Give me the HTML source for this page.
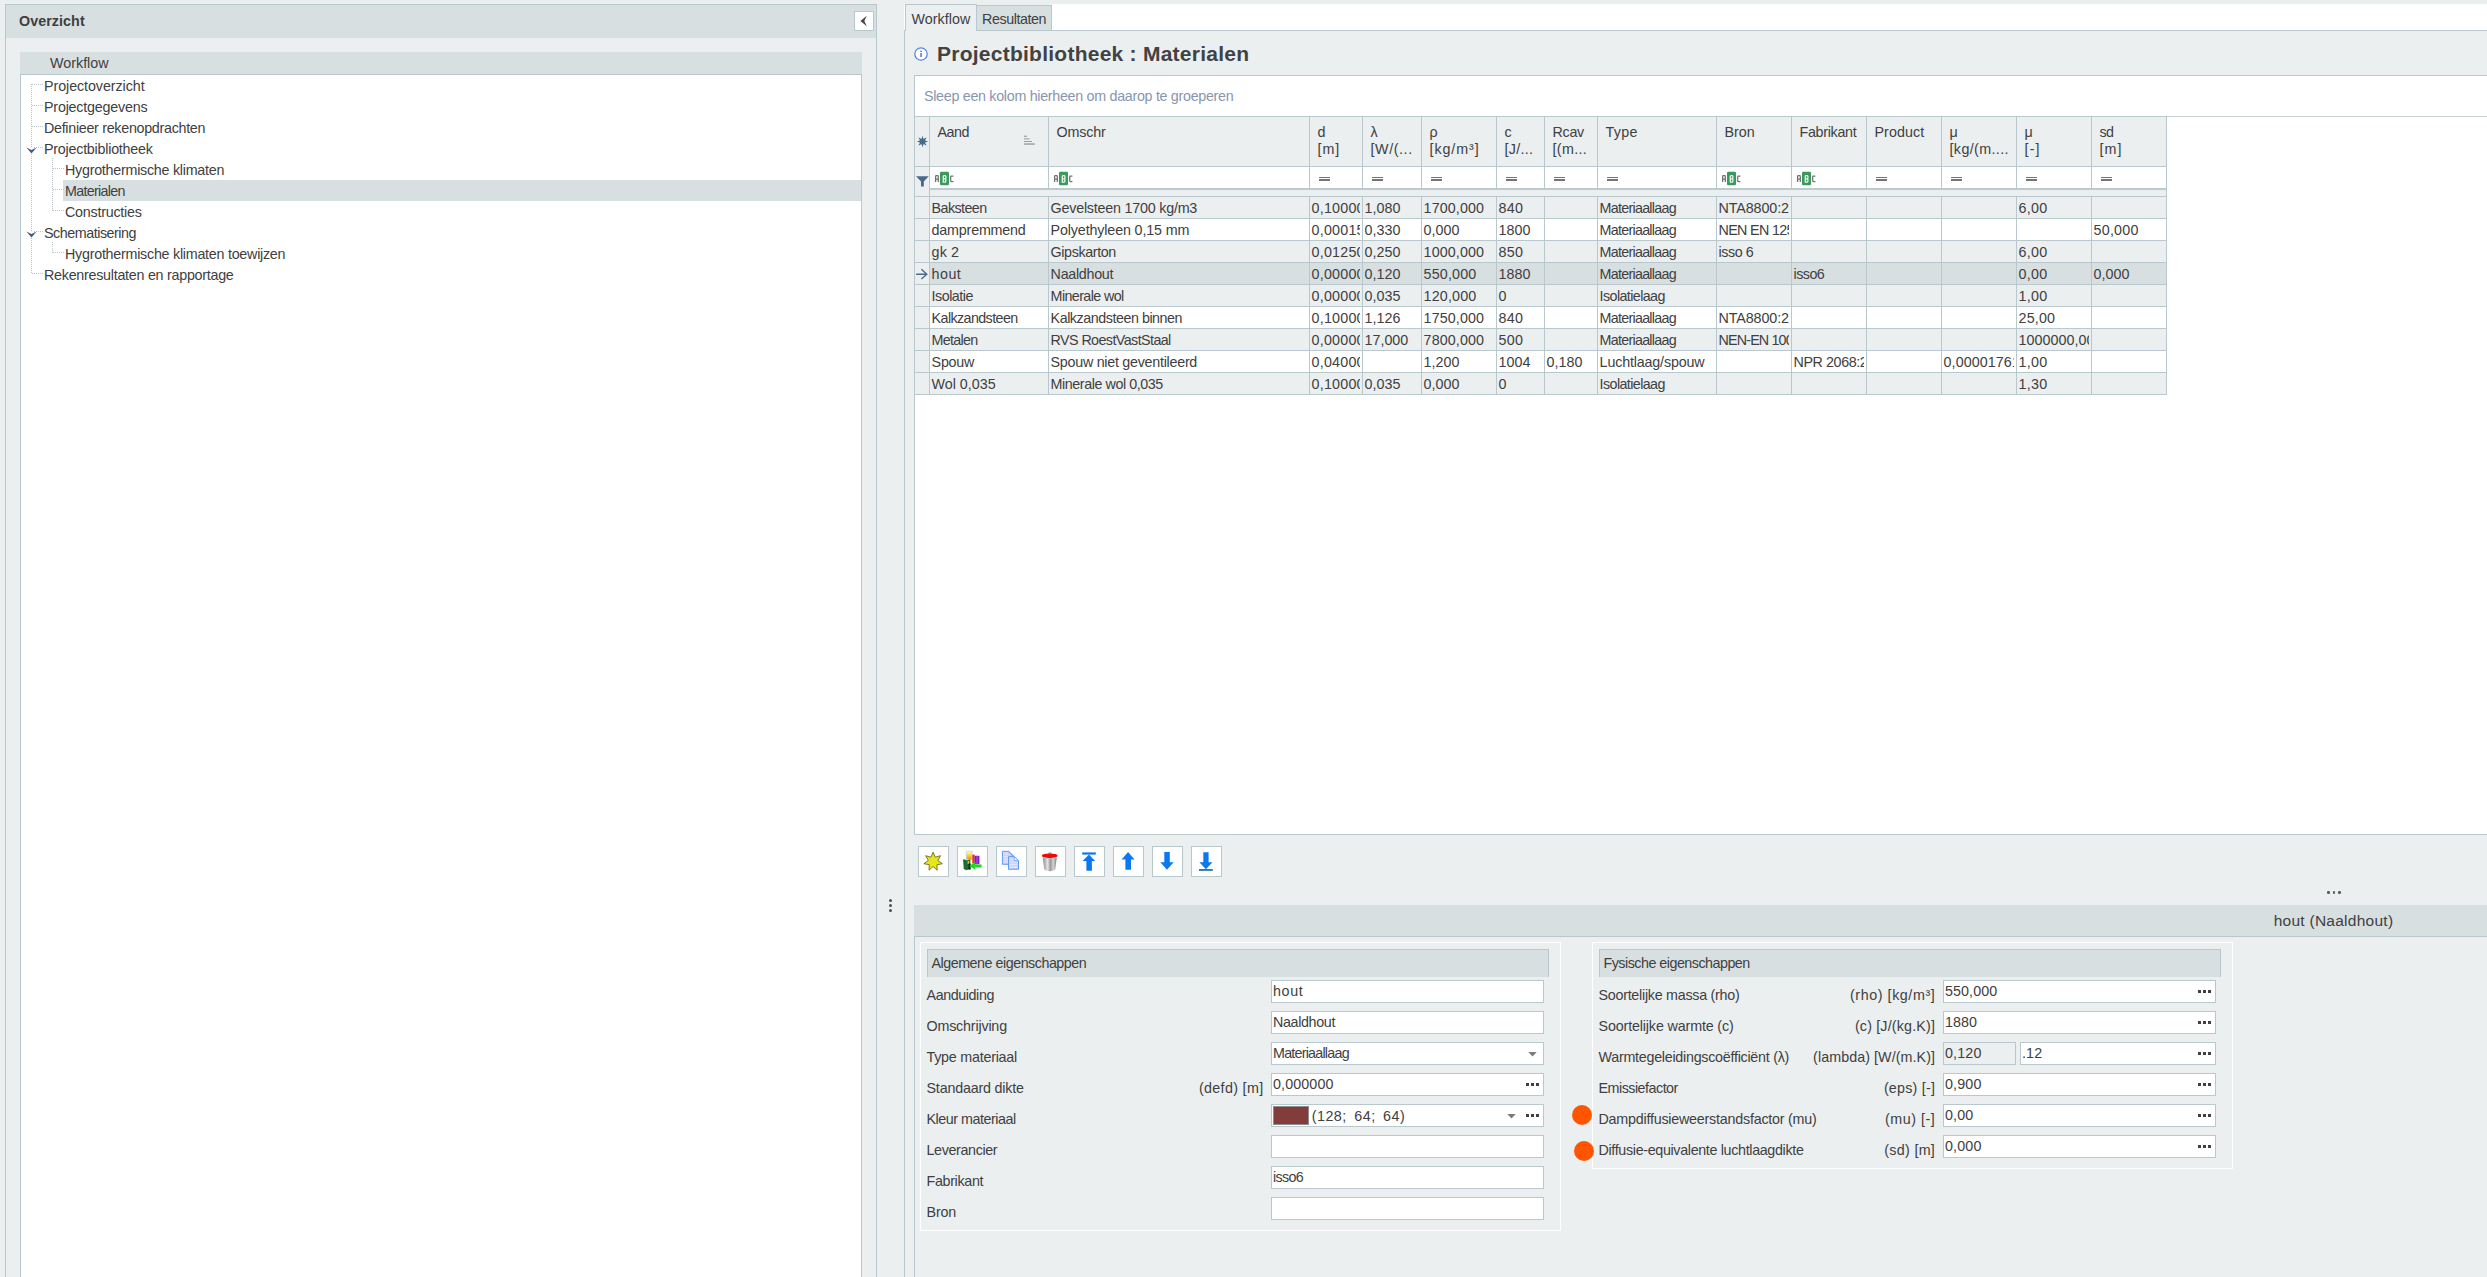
<!DOCTYPE html>
<html><head><meta charset="utf-8"><title>Projectbibliotheek : Materialen</title>
<style>
html,body{margin:0;padding:0}
body{width:2487px;height:1277px;overflow:hidden;background:#ebeff0;position:relative;font-family:"Liberation Sans",sans-serif;font-size:14.3px;color:#404040}
.a{position:absolute;box-sizing:border-box}
.t{position:absolute;white-space:nowrap;line-height:16px;height:16px}
.c{position:absolute;overflow:hidden;height:21px;box-sizing:border-box}
.c .t{top:3px;left:2.6px}
.hl{position:absolute;height:1px;background:#b9c8cc}
.vl{position:absolute;width:1px;background:#b9c8cc}
.inp{position:absolute;box-sizing:border-box;background:#fff;border:1px solid #b9c8cc;height:23px;overflow:hidden}
.btn{position:absolute;box-sizing:border-box;background:#fff;border:1px solid #b9c8cc;width:31px;height:31px}
.d3{position:absolute;width:3px;height:3px;background:#404040;box-shadow:5px 0 0 #404040,10px 0 0 #404040}
</style></head><body>

<div class="a" style="left:5px;top:4px;width:872px;height:1290px;border:1px solid #b9c8cc"></div>
<div class="a" style="left:6px;top:5px;width:870px;height:33px;background:#d8dfe1"></div>
<div class="t" style="left:19px;top:12.5px;font-size:14.3px;font-weight:bold;color:#3e3e3e;letter-spacing:0.064px">Overzicht</div>
<div class="a" style="left:854px;top:11px;width:20px;height:20px;background:#fff;border:1px solid #b9c8cc"></div>
<svg class="a" style="left:854px;top:11px" width="20" height="20" viewBox="0 0 20 20"><path d="M12.8 4.8 L6.4 10 L12.8 15.2 L10.4 10 Z" fill="#484848"/></svg>
<div class="a" style="left:20px;top:52px;width:842px;height:23px;background:#d8dfe1;border-bottom:1px solid #b9c8cc"></div>
<div class="a" style="left:20px;top:75px;width:842px;height:1210px;background:#fff;border-left:1px solid #b9c8cc;border-right:1px solid #b9c8cc"></div>
<div class="t" style="left:50px;top:55px;letter-spacing:0.009px">Workflow</div>
<div class="a" style="left:63px;top:180px;width:798px;height:21px;background:#d8dfe1"></div>
<div class="a" style="left:31px;top:84px;width:1px;height:190px;background:repeating-linear-gradient(to bottom,#bac6ce 0,#bac6ce 1px,transparent 1px,transparent 2px)"></div>
<div class="a" style="left:52px;top:158px;width:1px;height:53px;background:repeating-linear-gradient(to bottom,#bac6ce 0,#bac6ce 1px,transparent 1px,transparent 2px)"></div>
<div class="a" style="left:52px;top:242px;width:1px;height:11px;background:repeating-linear-gradient(to bottom,#bac6ce 0,#bac6ce 1px,transparent 1px,transparent 2px)"></div>
<div class="a" style="left:32px;top:84px;width:11px;height:1px;background:repeating-linear-gradient(to right,#bac6ce 0,#bac6ce 1px,transparent 1px,transparent 2px)"></div>
<div class="t" style="left:44px;top:77.5px;letter-spacing:-0.072px">Projectoverzicht</div>
<div class="a" style="left:32px;top:105px;width:11px;height:1px;background:repeating-linear-gradient(to right,#bac6ce 0,#bac6ce 1px,transparent 1px,transparent 2px)"></div>
<div class="t" style="left:44px;top:98.5px;letter-spacing:-0.201px">Projectgegevens</div>
<div class="a" style="left:32px;top:126px;width:11px;height:1px;background:repeating-linear-gradient(to right,#bac6ce 0,#bac6ce 1px,transparent 1px,transparent 2px)"></div>
<div class="t" style="left:44px;top:119.5px;letter-spacing:-0.294px">Definieer rekenopdrachten</div>
<div class="a" style="left:32px;top:147px;width:11px;height:1px;background:repeating-linear-gradient(to right,#bac6ce 0,#bac6ce 1px,transparent 1px,transparent 2px)"></div>
<div class="t" style="left:44px;top:140.5px;letter-spacing:-0.232px">Projectbibliotheek</div>
<svg class="a" style="left:25px;top:143px" width="13" height="12" viewBox="0 0 13 12"><rect x="5" y="4" width="3" height="7" fill="#fff"/><path d="M1.4 4.4 L6.5 10.4 L11.6 4.4 L6.5 6.9 Z" fill="#3f5f85"/></svg>
<div class="a" style="left:53px;top:168px;width:11px;height:1px;background:repeating-linear-gradient(to right,#bac6ce 0,#bac6ce 1px,transparent 1px,transparent 2px)"></div>
<div class="t" style="left:65px;top:161.5px;letter-spacing:-0.255px">Hygrothermische klimaten</div>
<div class="a" style="left:53px;top:189px;width:11px;height:1px;background:repeating-linear-gradient(to right,#bac6ce 0,#bac6ce 1px,transparent 1px,transparent 2px)"></div>
<div class="t" style="left:65px;top:182.5px;letter-spacing:-0.702px">Materialen</div>
<div class="a" style="left:53px;top:210px;width:11px;height:1px;background:repeating-linear-gradient(to right,#bac6ce 0,#bac6ce 1px,transparent 1px,transparent 2px)"></div>
<div class="t" style="left:65px;top:203.5px;letter-spacing:-0.232px">Constructies</div>
<div class="a" style="left:32px;top:231px;width:11px;height:1px;background:repeating-linear-gradient(to right,#bac6ce 0,#bac6ce 1px,transparent 1px,transparent 2px)"></div>
<div class="t" style="left:44px;top:224.5px;letter-spacing:-0.463px">Schematisering</div>
<svg class="a" style="left:25px;top:227px" width="13" height="12" viewBox="0 0 13 12"><rect x="5" y="4" width="3" height="7" fill="#fff"/><path d="M1.4 4.4 L6.5 10.4 L11.6 4.4 L6.5 6.9 Z" fill="#3f5f85"/></svg>
<div class="a" style="left:53px;top:252px;width:11px;height:1px;background:repeating-linear-gradient(to right,#bac6ce 0,#bac6ce 1px,transparent 1px,transparent 2px)"></div>
<div class="t" style="left:65px;top:245.5px;letter-spacing:-0.252px">Hygrothermische klimaten toewijzen</div>
<div class="a" style="left:32px;top:273px;width:11px;height:1px;background:repeating-linear-gradient(to right,#bac6ce 0,#bac6ce 1px,transparent 1px,transparent 2px)"></div>
<div class="t" style="left:44px;top:266.5px;letter-spacing:-0.261px">Rekenresultaten en rapportage</div>
<div class="a" style="left:889px;top:898.8px;width:3px;height:3px;border-radius:2px;background:#505050"></div>
<div class="a" style="left:889px;top:904px;width:3px;height:3px;border-radius:2px;background:#505050"></div>
<div class="a" style="left:889px;top:909.2px;width:3px;height:3px;border-radius:2px;background:#505050"></div>
<div class="a" style="left:1052px;top:4px;width:1440px;height:26px;background:#fff"></div>
<div class="hl" style="left:904px;top:30px;width:1600px"></div>
<div class="vl" style="left:904px;top:30px;height:1260px"></div>
<div class="a" style="left:905px;top:4px;width:72px;height:27px;background:#ebeff0;border:1px solid #b9c8cc;border-bottom:none"></div>
<div class="a" style="left:904px;top:4px;width:1px;height:26px;background:#fff"></div>
<div class="a" style="left:976px;top:5px;width:76px;height:26px;background:#d8dfe1;border:1px solid #b9c8cc"></div>
<div class="t" style="left:911.5px;top:11px;letter-spacing:0.049px">Workflow</div>
<div class="t" style="left:982px;top:11px;letter-spacing:-0.427px">Resultaten</div>
<svg class="a" style="left:913px;top:46px" width="16" height="16" viewBox="0 0 16 16"><circle cx="8" cy="8" r="6.2" fill="#fff" stroke="#5b86e0" stroke-width="1.3"/><rect x="7.3" y="7" width="1.5" height="4" fill="#4a76d6"/><rect x="7.3" y="4.6" width="1.5" height="1.5" fill="#4a76d6"/></svg>
<div class="t" style="left:937px;top:42.3px;font-size:21px;line-height:24px;height:24px;font-weight:bold;color:#424242;letter-spacing:0.250px">Projectbibliotheek : Materialen</div>
<div class="a" style="left:914px;top:75px;width:1600px;height:760px;background:#fff;border:1px solid #b9c8cc"></div>
<div class="t" style="left:924px;top:88.2px;color:#8796ad;letter-spacing:-0.301px">Sleep een kolom hierheen om daarop te groeperen</div>
<div class="hl" style="left:915px;top:116px;width:1600px;background:#c3cfd3"></div>
<div class="a" style="left:915px;top:116px;width:1252px;height:51px;background:#ebeff0;border-top:1px solid #b9c8cc;border-bottom:1px solid #b9c8cc"></div>
<div class="a" style="left:915px;top:167px;width:14px;height:29px;background:#ebeff0"></div>
<div class="hl" style="left:915px;top:196px;width:1252px"></div>
<div class="a" style="left:929px;top:197px;width:1237px;height:21px;background:#ebeff0"></div>
<div class="a" style="left:915px;top:197px;width:14px;height:21px;background:#ebeff0"></div>
<div class="hl" style="left:915px;top:218px;width:1252px"></div>
<div class="c" style="left:929px;top:197px;width:117px">
<div class="t" style="left:2.6px;top:2.5px;letter-spacing:-0.577px">Baksteen</div>
</div>
<div class="c" style="left:1048px;top:197px;width:259px">
<div class="t" style="left:2.6px;top:2.5px;letter-spacing:-0.215px">Gevelsteen 1700 kg/m3</div>
</div>
<div class="c" style="left:1309px;top:197px;width:51px">
<div class="t" style="left:2.6px;top:2.5px;letter-spacing:0.212px">0,100000</div>
</div>
<div class="c" style="left:1362px;top:197px;width:57px">
<div class="t" style="left:2.6px;top:2.5px;letter-spacing:0.026px">1,080</div>
</div>
<div class="c" style="left:1421px;top:197px;width:73px">
<div class="t" style="left:2.6px;top:2.5px;letter-spacing:0.101px">1700,000</div>
</div>
<div class="c" style="left:1496px;top:197px;width:46px">
<div class="t" style="left:2.6px;top:2.5px;letter-spacing:0.216px">840</div>
</div>
<div class="c" style="left:1597px;top:197px;width:117px">
<div class="t" style="left:2.6px;top:2.5px;letter-spacing:-0.731px">Materiaallaag</div>
</div>
<div class="c" style="left:1716px;top:197px;width:73px">
<div class="t" style="left:2.6px;top:2.5px;letter-spacing:-0.114px">NTA8800:2020</div>
</div>
<div class="c" style="left:2016px;top:197px;width:73px">
<div class="t" style="left:2.6px;top:2.5px;letter-spacing:0.221px">6,00</div>
</div>
<div class="a" style="left:929px;top:219px;width:1237px;height:21px;background:#fff"></div>
<div class="a" style="left:915px;top:219px;width:14px;height:21px;background:#ebeff0"></div>
<div class="hl" style="left:915px;top:240px;width:1252px"></div>
<div class="c" style="left:929px;top:219px;width:117px">
<div class="t" style="left:2.6px;top:2.5px;letter-spacing:-0.196px">dampremmend</div>
</div>
<div class="c" style="left:1048px;top:219px;width:259px">
<div class="t" style="left:2.6px;top:2.5px;letter-spacing:-0.142px">Polyethyleen 0,15 mm</div>
</div>
<div class="c" style="left:1309px;top:219px;width:51px">
<div class="t" style="left:2.6px;top:2.5px;letter-spacing:0.212px">0,000150</div>
</div>
<div class="c" style="left:1362px;top:219px;width:57px">
<div class="t" style="left:2.6px;top:2.5px;letter-spacing:0.026px">0,330</div>
</div>
<div class="c" style="left:1421px;top:219px;width:73px">
<div class="t" style="left:2.6px;top:2.5px;letter-spacing:0.026px">0,000</div>
</div>
<div class="c" style="left:1496px;top:219px;width:46px">
<div class="t" style="left:2.6px;top:2.5px;letter-spacing:0.054px">1800</div>
</div>
<div class="c" style="left:1597px;top:219px;width:117px">
<div class="t" style="left:2.6px;top:2.5px;letter-spacing:-0.731px">Materiaallaag</div>
</div>
<div class="c" style="left:1716px;top:219px;width:73px">
<div class="t" style="left:2.6px;top:2.5px;letter-spacing:-0.671px">NEN EN 12524</div>
</div>
<div class="c" style="left:2091px;top:219px;width:73px">
<div class="t" style="left:2.6px;top:2.5px;letter-spacing:0.212px">50,000</div>
</div>
<div class="a" style="left:929px;top:241px;width:1237px;height:21px;background:#ebeff0"></div>
<div class="a" style="left:915px;top:241px;width:14px;height:21px;background:#ebeff0"></div>
<div class="hl" style="left:915px;top:262px;width:1252px"></div>
<div class="c" style="left:929px;top:241px;width:117px">
<div class="t" style="left:2.6px;top:2.5px;letter-spacing:0.105px">gk 2</div>
</div>
<div class="c" style="left:1048px;top:241px;width:259px">
<div class="t" style="left:2.6px;top:2.5px;letter-spacing:-0.383px">Gipskarton</div>
</div>
<div class="c" style="left:1309px;top:241px;width:51px">
<div class="t" style="left:2.6px;top:2.5px;letter-spacing:0.212px">0,012500</div>
</div>
<div class="c" style="left:1362px;top:241px;width:57px">
<div class="t" style="left:2.6px;top:2.5px;letter-spacing:0.026px">0,250</div>
</div>
<div class="c" style="left:1421px;top:241px;width:73px">
<div class="t" style="left:2.6px;top:2.5px;letter-spacing:0.101px">1000,000</div>
</div>
<div class="c" style="left:1496px;top:241px;width:46px">
<div class="t" style="left:2.6px;top:2.5px;letter-spacing:0.216px">850</div>
</div>
<div class="c" style="left:1597px;top:241px;width:117px">
<div class="t" style="left:2.6px;top:2.5px;letter-spacing:-0.731px">Materiaallaag</div>
</div>
<div class="c" style="left:1716px;top:241px;width:73px">
<div class="t" style="left:2.6px;top:2.5px;letter-spacing:-0.429px">isso 6</div>
</div>
<div class="c" style="left:2016px;top:241px;width:73px">
<div class="t" style="left:2.6px;top:2.5px;letter-spacing:0.221px">6,00</div>
</div>
<div class="a" style="left:929px;top:263px;width:1237px;height:21px;background:#d8dfe1"></div>
<div class="a" style="left:915px;top:263px;width:14px;height:21px;background:#ebeff0"></div>
<div class="hl" style="left:915px;top:284px;width:1252px"></div>
<div class="c" style="left:929px;top:263px;width:117px">
<div class="t" style="left:2.6px;top:2.5px;letter-spacing:0.449px">hout</div>
</div>
<div class="c" style="left:1048px;top:263px;width:259px">
<div class="t" style="left:2.6px;top:2.5px;letter-spacing:-0.293px">Naaldhout</div>
</div>
<div class="c" style="left:1309px;top:263px;width:51px">
<div class="t" style="left:2.6px;top:2.5px;letter-spacing:0.212px">0,000000</div>
</div>
<div class="c" style="left:1362px;top:263px;width:57px">
<div class="t" style="left:2.6px;top:2.5px;letter-spacing:0.026px">0,120</div>
</div>
<div class="c" style="left:1421px;top:263px;width:73px">
<div class="t" style="left:2.6px;top:2.5px;letter-spacing:0.171px">550,000</div>
</div>
<div class="c" style="left:1496px;top:263px;width:46px">
<div class="t" style="left:2.6px;top:2.5px;letter-spacing:0.054px">1880</div>
</div>
<div class="c" style="left:1597px;top:263px;width:117px">
<div class="t" style="left:2.6px;top:2.5px;letter-spacing:-0.731px">Materiaallaag</div>
</div>
<div class="c" style="left:1791px;top:263px;width:73px">
<div class="t" style="left:2.6px;top:2.5px;letter-spacing:-0.553px">isso6</div>
</div>
<div class="c" style="left:2016px;top:263px;width:73px">
<div class="t" style="left:2.6px;top:2.5px;letter-spacing:0.221px">0,00</div>
</div>
<div class="c" style="left:2091px;top:263px;width:73px">
<div class="t" style="left:2.6px;top:2.5px;letter-spacing:0.026px">0,000</div>
</div>
<div class="a" style="left:929px;top:285px;width:1237px;height:21px;background:#ebeff0"></div>
<div class="a" style="left:915px;top:285px;width:14px;height:21px;background:#ebeff0"></div>
<div class="hl" style="left:915px;top:306px;width:1252px"></div>
<div class="c" style="left:929px;top:285px;width:117px">
<div class="t" style="left:2.6px;top:2.5px;letter-spacing:-0.508px">Isolatie</div>
</div>
<div class="c" style="left:1048px;top:285px;width:259px">
<div class="t" style="left:2.6px;top:2.5px;letter-spacing:-0.597px">Minerale wol</div>
</div>
<div class="c" style="left:1309px;top:285px;width:51px">
<div class="t" style="left:2.6px;top:2.5px;letter-spacing:0.212px">0,000000</div>
</div>
<div class="c" style="left:1362px;top:285px;width:57px">
<div class="t" style="left:2.6px;top:2.5px;letter-spacing:0.026px">0,035</div>
</div>
<div class="c" style="left:1421px;top:285px;width:73px">
<div class="t" style="left:2.6px;top:2.5px;letter-spacing:0.171px">120,000</div>
</div>
<div class="c" style="left:1496px;top:285px;width:46px">
<div class="t" style="left:2.6px;top:2.5px">0</div>
</div>
<div class="c" style="left:1597px;top:285px;width:117px">
<div class="t" style="left:2.6px;top:2.5px;letter-spacing:-0.595px">Isolatielaag</div>
</div>
<div class="c" style="left:2016px;top:285px;width:73px">
<div class="t" style="left:2.6px;top:2.5px;letter-spacing:0.221px">1,00</div>
</div>
<div class="a" style="left:929px;top:307px;width:1237px;height:21px;background:#fff"></div>
<div class="a" style="left:915px;top:307px;width:14px;height:21px;background:#ebeff0"></div>
<div class="hl" style="left:915px;top:328px;width:1252px"></div>
<div class="c" style="left:929px;top:307px;width:117px">
<div class="t" style="left:2.6px;top:2.5px;letter-spacing:-0.600px">Kalkzandsteen</div>
</div>
<div class="c" style="left:1048px;top:307px;width:259px">
<div class="t" style="left:2.6px;top:2.5px;letter-spacing:-0.462px">Kalkzandsteen binnen</div>
</div>
<div class="c" style="left:1309px;top:307px;width:51px">
<div class="t" style="left:2.6px;top:2.5px;letter-spacing:0.212px">0,100000</div>
</div>
<div class="c" style="left:1362px;top:307px;width:57px">
<div class="t" style="left:2.6px;top:2.5px;letter-spacing:0.026px">1,126</div>
</div>
<div class="c" style="left:1421px;top:307px;width:73px">
<div class="t" style="left:2.6px;top:2.5px;letter-spacing:0.101px">1750,000</div>
</div>
<div class="c" style="left:1496px;top:307px;width:46px">
<div class="t" style="left:2.6px;top:2.5px;letter-spacing:0.216px">840</div>
</div>
<div class="c" style="left:1597px;top:307px;width:117px">
<div class="t" style="left:2.6px;top:2.5px;letter-spacing:-0.731px">Materiaallaag</div>
</div>
<div class="c" style="left:1716px;top:307px;width:73px">
<div class="t" style="left:2.6px;top:2.5px;letter-spacing:-0.114px">NTA8800:2020</div>
</div>
<div class="c" style="left:2016px;top:307px;width:73px">
<div class="t" style="left:2.6px;top:2.5px;letter-spacing:0.160px">25,00</div>
</div>
<div class="a" style="left:929px;top:329px;width:1237px;height:21px;background:#ebeff0"></div>
<div class="a" style="left:915px;top:329px;width:14px;height:21px;background:#ebeff0"></div>
<div class="hl" style="left:915px;top:350px;width:1252px"></div>
<div class="c" style="left:929px;top:329px;width:117px">
<div class="t" style="left:2.6px;top:2.5px;letter-spacing:-0.704px">Metalen</div>
</div>
<div class="c" style="left:1048px;top:329px;width:259px">
<div class="t" style="left:2.6px;top:2.5px;letter-spacing:-0.582px">RVS RoestVastStaal</div>
</div>
<div class="c" style="left:1309px;top:329px;width:51px">
<div class="t" style="left:2.6px;top:2.5px;letter-spacing:0.212px">0,000000</div>
</div>
<div class="c" style="left:1362px;top:329px;width:57px">
<div class="t" style="left:2.6px;top:2.5px;letter-spacing:-0.024px">17,000</div>
</div>
<div class="c" style="left:1421px;top:329px;width:73px">
<div class="t" style="left:2.6px;top:2.5px;letter-spacing:0.101px">7800,000</div>
</div>
<div class="c" style="left:1496px;top:329px;width:46px">
<div class="t" style="left:2.6px;top:2.5px;letter-spacing:0.216px">500</div>
</div>
<div class="c" style="left:1597px;top:329px;width:117px">
<div class="t" style="left:2.6px;top:2.5px;letter-spacing:-0.731px">Materiaallaag</div>
</div>
<div class="c" style="left:1716px;top:329px;width:73px">
<div class="t" style="left:2.6px;top:2.5px;letter-spacing:-0.846px">NEN-EN 10088</div>
</div>
<div class="c" style="left:2016px;top:329px;width:73px">
<div class="t" style="left:2.6px;top:2.5px;letter-spacing:0.024px">1000000,00</div>
</div>
<div class="a" style="left:929px;top:351px;width:1237px;height:21px;background:#fff"></div>
<div class="a" style="left:915px;top:351px;width:14px;height:21px;background:#ebeff0"></div>
<div class="hl" style="left:915px;top:372px;width:1252px"></div>
<div class="c" style="left:929px;top:351px;width:117px">
<div class="t" style="left:2.6px;top:2.5px;letter-spacing:-0.249px">Spouw</div>
</div>
<div class="c" style="left:1048px;top:351px;width:259px">
<div class="t" style="left:2.6px;top:2.5px;letter-spacing:-0.267px">Spouw niet geventileerd</div>
</div>
<div class="c" style="left:1309px;top:351px;width:51px">
<div class="t" style="left:2.6px;top:2.5px;letter-spacing:0.212px">0,040000</div>
</div>
<div class="c" style="left:1421px;top:351px;width:73px">
<div class="t" style="left:2.6px;top:2.5px;letter-spacing:0.026px">1,200</div>
</div>
<div class="c" style="left:1496px;top:351px;width:46px">
<div class="t" style="left:2.6px;top:2.5px;letter-spacing:0.054px">1004</div>
</div>
<div class="c" style="left:1544px;top:351px;width:51px">
<div class="t" style="left:2.6px;top:2.5px;letter-spacing:0.026px">0,180</div>
</div>
<div class="c" style="left:1597px;top:351px;width:117px">
<div class="t" style="left:2.6px;top:2.5px;letter-spacing:-0.166px">Luchtlaag/spouw</div>
</div>
<div class="c" style="left:1791px;top:351px;width:73px">
<div class="t" style="left:2.6px;top:2.5px;letter-spacing:-0.416px">NPR 2068:2002</div>
</div>
<div class="c" style="left:1941px;top:351px;width:73px">
<div class="t" style="left:2.6px;top:2.5px;letter-spacing:0.060px">0,00001761</div>
</div>
<div class="c" style="left:2016px;top:351px;width:73px">
<div class="t" style="left:2.6px;top:2.5px;letter-spacing:0.221px">1,00</div>
</div>
<div class="a" style="left:929px;top:373px;width:1237px;height:21px;background:#ebeff0"></div>
<div class="a" style="left:915px;top:373px;width:14px;height:21px;background:#ebeff0"></div>
<div class="hl" style="left:915px;top:394px;width:1252px"></div>
<div class="c" style="left:929px;top:373px;width:117px">
<div class="t" style="left:2.6px;top:2.5px;letter-spacing:-0.015px">Wol 0,035</div>
</div>
<div class="c" style="left:1048px;top:373px;width:259px">
<div class="t" style="left:2.6px;top:2.5px;letter-spacing:-0.429px">Minerale wol 0,035</div>
</div>
<div class="c" style="left:1309px;top:373px;width:51px">
<div class="t" style="left:2.6px;top:2.5px;letter-spacing:0.212px">0,100000</div>
</div>
<div class="c" style="left:1362px;top:373px;width:57px">
<div class="t" style="left:2.6px;top:2.5px;letter-spacing:0.026px">0,035</div>
</div>
<div class="c" style="left:1421px;top:373px;width:73px">
<div class="t" style="left:2.6px;top:2.5px;letter-spacing:0.026px">0,000</div>
</div>
<div class="c" style="left:1496px;top:373px;width:46px">
<div class="t" style="left:2.6px;top:2.5px">0</div>
</div>
<div class="c" style="left:1597px;top:373px;width:117px">
<div class="t" style="left:2.6px;top:2.5px;letter-spacing:-0.595px">Isolatielaag</div>
</div>
<div class="c" style="left:2016px;top:373px;width:73px">
<div class="t" style="left:2.6px;top:2.5px;letter-spacing:0.221px">1,30</div>
</div>
<div class="vl" style="left:929px;top:116px;height:279px"></div>
<div class="vl" style="left:1048px;top:116px;height:279px"></div>
<div class="vl" style="left:1309px;top:116px;height:279px"></div>
<div class="vl" style="left:1362px;top:116px;height:279px"></div>
<div class="vl" style="left:1421px;top:116px;height:279px"></div>
<div class="vl" style="left:1496px;top:116px;height:279px"></div>
<div class="vl" style="left:1544px;top:116px;height:279px"></div>
<div class="vl" style="left:1597px;top:116px;height:279px"></div>
<div class="vl" style="left:1716px;top:116px;height:279px"></div>
<div class="vl" style="left:1791px;top:116px;height:279px"></div>
<div class="vl" style="left:1866px;top:116px;height:279px"></div>
<div class="vl" style="left:1941px;top:116px;height:279px"></div>
<div class="vl" style="left:2016px;top:116px;height:279px"></div>
<div class="vl" style="left:2091px;top:116px;height:279px"></div>
<div class="vl" style="left:2166px;top:116px;height:279px"></div>
<div class="a" style="left:929px;top:188px;width:1238px;height:2px;background:#bccad0"></div>
<div class="a" style="left:930px;top:190px;width:1236px;height:6px;background:#ebeff0"></div>
<div class="t" style="left:937.5px;top:124px;letter-spacing:-0.483px">Aand</div>
<svg class="a" style="left:934px;top:171px" width="21" height="15" viewBox="0 0 21 15"><rect x="6" y="0.8" width="9" height="13.5" rx="1.3" fill="#3a9a5c"/><g fill="none" stroke-width="1.25"><path d="M1.6 11V5.4Q1.6 4.7 2.3 4.7H3.6Q4.3 4.7 4.3 5.4V11M1.6 8H4.3" stroke="#707070"/><path d="M9.3 4.7H11.2Q11.9 4.7 11.9 5.6V6.9Q11.9 7.8 11.2 7.8H9.3M9.3 7.8H11.2Q11.9 7.8 11.9 8.7V10.1Q11.9 11 11.2 11H9.3ZM9.3 4.7V11" stroke="#eef8f0"/><path d="M19.4 5.2H17.4Q16.7 5.2 16.7 5.9V9.8Q16.7 10.5 17.4 10.5H19.4" stroke="#707070"/></g></svg>
<div class="t" style="left:1056.5px;top:124px;letter-spacing:-0.172px">Omschr</div>
<svg class="a" style="left:1053px;top:171px" width="21" height="15" viewBox="0 0 21 15"><rect x="6" y="0.8" width="9" height="13.5" rx="1.3" fill="#3a9a5c"/><g fill="none" stroke-width="1.25"><path d="M1.6 11V5.4Q1.6 4.7 2.3 4.7H3.6Q4.3 4.7 4.3 5.4V11M1.6 8H4.3" stroke="#707070"/><path d="M9.3 4.7H11.2Q11.9 4.7 11.9 5.6V6.9Q11.9 7.8 11.2 7.8H9.3M9.3 7.8H11.2Q11.9 7.8 11.9 8.7V10.1Q11.9 11 11.2 11H9.3ZM9.3 4.7V11" stroke="#eef8f0"/><path d="M19.4 5.2H17.4Q16.7 5.2 16.7 5.9V9.8Q16.7 10.5 17.4 10.5H19.4" stroke="#707070"/></g></svg>
<div class="t" style="left:1317.5px;top:124px">d</div>
<div class="t" style="left:1317.5px;top:141px;letter-spacing:0.936px">[m]</div>
<div class="a" style="left:1319px;top:176.7px;width:11px;height:1.2px;background:#747474"></div>
<div class="a" style="left:1319px;top:179.4px;width:11px;height:1.2px;background:#747474"></div>
<div class="t" style="left:1370.5px;top:124px">λ</div>
<div class="t" style="left:1370.5px;top:141px;letter-spacing:0.581px">[W/(...</div>
<div class="a" style="left:1372px;top:176.7px;width:11px;height:1.2px;background:#747474"></div>
<div class="a" style="left:1372px;top:179.4px;width:11px;height:1.2px;background:#747474"></div>
<div class="t" style="left:1429.5px;top:124px">ρ</div>
<div class="t" style="left:1429.5px;top:141px;letter-spacing:0.910px">[kg/m³]</div>
<div class="a" style="left:1431px;top:176.7px;width:11px;height:1.2px;background:#747474"></div>
<div class="a" style="left:1431px;top:179.4px;width:11px;height:1.2px;background:#747474"></div>
<div class="t" style="left:1504.5px;top:124px">c</div>
<div class="t" style="left:1504.5px;top:141px;letter-spacing:0.288px">[J/...</div>
<div class="a" style="left:1506px;top:176.7px;width:11px;height:1.2px;background:#747474"></div>
<div class="a" style="left:1506px;top:179.4px;width:11px;height:1.2px;background:#747474"></div>
<div class="t" style="left:1552.5px;top:124px;letter-spacing:-0.279px">Rcav</div>
<div class="t" style="left:1552.5px;top:141px;letter-spacing:0.334px">[(m...</div>
<div class="a" style="left:1554px;top:176.7px;width:11px;height:1.2px;background:#747474"></div>
<div class="a" style="left:1554px;top:179.4px;width:11px;height:1.2px;background:#747474"></div>
<div class="t" style="left:1605.5px;top:124px;letter-spacing:0.343px">Type</div>
<div class="a" style="left:1607px;top:176.7px;width:11px;height:1.2px;background:#747474"></div>
<div class="a" style="left:1607px;top:179.4px;width:11px;height:1.2px;background:#747474"></div>
<div class="t" style="left:1724.5px;top:124px;letter-spacing:-0.029px">Bron</div>
<svg class="a" style="left:1721px;top:171px" width="21" height="15" viewBox="0 0 21 15"><rect x="6" y="0.8" width="9" height="13.5" rx="1.3" fill="#3a9a5c"/><g fill="none" stroke-width="1.25"><path d="M1.6 11V5.4Q1.6 4.7 2.3 4.7H3.6Q4.3 4.7 4.3 5.4V11M1.6 8H4.3" stroke="#707070"/><path d="M9.3 4.7H11.2Q11.9 4.7 11.9 5.6V6.9Q11.9 7.8 11.2 7.8H9.3M9.3 7.8H11.2Q11.9 7.8 11.9 8.7V10.1Q11.9 11 11.2 11H9.3ZM9.3 4.7V11" stroke="#eef8f0"/><path d="M19.4 5.2H17.4Q16.7 5.2 16.7 5.9V9.8Q16.7 10.5 17.4 10.5H19.4" stroke="#707070"/></g></svg>
<div class="t" style="left:1799.5px;top:124px;letter-spacing:-0.307px">Fabrikant</div>
<svg class="a" style="left:1796px;top:171px" width="21" height="15" viewBox="0 0 21 15"><rect x="6" y="0.8" width="9" height="13.5" rx="1.3" fill="#3a9a5c"/><g fill="none" stroke-width="1.25"><path d="M1.6 11V5.4Q1.6 4.7 2.3 4.7H3.6Q4.3 4.7 4.3 5.4V11M1.6 8H4.3" stroke="#707070"/><path d="M9.3 4.7H11.2Q11.9 4.7 11.9 5.6V6.9Q11.9 7.8 11.2 7.8H9.3M9.3 7.8H11.2Q11.9 7.8 11.9 8.7V10.1Q11.9 11 11.2 11H9.3ZM9.3 4.7V11" stroke="#eef8f0"/><path d="M19.4 5.2H17.4Q16.7 5.2 16.7 5.9V9.8Q16.7 10.5 17.4 10.5H19.4" stroke="#707070"/></g></svg>
<div class="t" style="left:1874.5px;top:124px;letter-spacing:0.080px">Product</div>
<div class="a" style="left:1876px;top:176.7px;width:11px;height:1.2px;background:#747474"></div>
<div class="a" style="left:1876px;top:179.4px;width:11px;height:1.2px;background:#747474"></div>
<div class="t" style="left:1949.5px;top:124px">μ</div>
<div class="t" style="left:1949.5px;top:141px;letter-spacing:0.378px">[kg/(m....</div>
<div class="a" style="left:1951px;top:176.7px;width:11px;height:1.2px;background:#747474"></div>
<div class="a" style="left:1951px;top:179.4px;width:11px;height:1.2px;background:#747474"></div>
<div class="t" style="left:2024.5px;top:124px">μ</div>
<div class="t" style="left:2024.5px;top:141px;letter-spacing:1.193px">[-]</div>
<div class="a" style="left:2026px;top:176.7px;width:11px;height:1.2px;background:#747474"></div>
<div class="a" style="left:2026px;top:179.4px;width:11px;height:1.2px;background:#747474"></div>
<div class="t" style="left:2099.5px;top:124px;letter-spacing:-0.606px">sd</div>
<div class="t" style="left:2099.5px;top:141px;letter-spacing:1.016px">[m]</div>
<div class="a" style="left:2101px;top:176.7px;width:11px;height:1.2px;background:#747474"></div>
<div class="a" style="left:2101px;top:179.4px;width:11px;height:1.2px;background:#747474"></div>
<svg class="a" style="left:915.9px;top:134.9px" width="13" height="13" viewBox="0 0 13 13"><g fill="#4a6a8c"><path d="M6.5 0.4L7.7 5.3L5.3 5.3ZM6.5 12.6L7.7 7.7L5.3 7.7ZM0.6 6.5L5.3 5.3L5.3 7.7ZM12.4 6.5L7.7 5.3L7.7 7.7Z"/><path d="M2.3 2.3L6.7 4.7L4.7 6.7ZM10.7 2.3L8.3 6.7L6.3 4.7ZM2.3 10.7L4.7 6.3L6.7 8.3ZM10.7 10.7L6.3 8.3L8.3 6.3Z"/><circle cx="6.5" cy="6.5" r="2.9"/></g></svg>
<svg class="a" style="left:916px;top:175px" width="13" height="13" viewBox="0 0 13 13"><path d="M0.1 1.2 H12.7 L7.8 6.6 V11.6 H5 V6.6 Z" fill="#4a6a8c"/></svg>
<svg class="a" style="left:915px;top:267px" width="14" height="14" viewBox="0 0 14 14"><path d="M1.1 7.2H11.6M6.4 2.3L11.8 7.2L6.4 12.1" fill="none" stroke="#4a6a8c" stroke-width="1.35"/></svg>
<svg class="a" style="left:1023px;top:135px" width="13" height="11" viewBox="0 0 13 11"><rect x="1" y="0.6" width="3" height="1.3" fill="#a2a4a6"/><rect x="1" y="3" width="5.5" height="1.6" fill="#b6babc"/><rect x="1" y="6" width="8" height="1" fill="#9c9e9f"/><rect x="1" y="8.1" width="10.8" height="1.9" fill="#aeb2b4"/></svg>
<div class="btn" style="left:918px;top:846px"></div>
<div class="btn" style="left:957px;top:846px"></div>
<div class="btn" style="left:996px;top:846px"></div>
<div class="btn" style="left:1035px;top:846px"></div>
<div class="btn" style="left:1074px;top:846px"></div>
<div class="btn" style="left:1113px;top:846px"></div>
<div class="btn" style="left:1152px;top:846px"></div>
<div class="btn" style="left:1191px;top:846px"></div>
<svg class="a" style="left:918px;top:846px" width="31" height="31" viewBox="0 0 31 31"><path d="M15.1 6.1L17.2 11.2L22.5 9.7L19.9 14.5L24.4 17.7L18.9 18.7L19.2 24.2L15.1 20.5L11.0 24.2L11.3 18.7L5.8 17.7L10.3 14.5L7.7 9.7L13.0 11.2Z" fill="#e6e61e" stroke="#6e6e16" stroke-width="0.9" stroke-linejoin="miter"/></svg>
<svg class="a" style="left:957px;top:846.3px" width="31" height="31" viewBox="0 0 31 31"><defs><linearGradient id="bk" x1="0" y1="0" x2="0" y2="1"><stop offset="0" stop-color="#fffbe6"/><stop offset="0.45" stop-color="#ffd824"/><stop offset="1" stop-color="#e88a14"/></linearGradient></defs><rect x="9.3" y="5.2" width="5.8" height="8.6" fill="url(#bk)" stroke="#cbd6e6" stroke-width="0.9"/><rect x="15.3" y="8.6" width="2.4" height="9" fill="#e03a14"/><rect x="17.6" y="9.8" width="4.8" height="8.4" fill="#8a14c8"/><rect x="19.4" y="9.8" width="1.3" height="8.4" fill="#b44ae8"/><path d="M6 13.4L9.6 12.7L13.4 13.4L13.2 22.8L9.4 24.2L6.8 23Z" fill="#1c6e2c"/><path d="M6.3 13.5L9.6 12.8L13.2 13.5L9.8 14.3Z" fill="#cfe2ee"/><rect x="10.6" y="15" width="1.5" height="3" fill="#d8c020"/><rect x="11.6" y="17.6" width="2" height="6" fill="#06120a"/><path d="M12.1 19.9L18.5 15.9L18.2 18.5L24.6 18.5L24.6 21.4L18.2 21.4L18.5 23.7Z" fill="#14e014"/></svg>
<svg class="a" style="left:996px;top:846px" width="31" height="31" viewBox="0 0 31 31"><path d="M6.4 5.3H12.6L17 9.8V18.3H6.4Z" fill="#cfd1fb" stroke="#5e9ef0" stroke-width="1"/><path d="M7.4 8H12M7.4 10.6H14M7.4 13.2H12M7.4 15.8H12" stroke="#e6e8ff" stroke-width="1"/><path d="M12.5 10.4H18.2L22.5 14.8V23.3H12.5Z" fill="#cfd1fb" stroke="#5e9ef0" stroke-width="1"/><path d="M13.5 13.4H18M13.5 16H21.4M13.5 18.6H21.4M13.5 21.2H21.4" stroke="#e6e8ff" stroke-width="1"/><path d="M18.2 10.4V14.8H22.5Z" fill="#f2f6ff" stroke="#5e9ef0" stroke-width="0.8"/><path d="M12.6 5.3L18.2 10.6" stroke="#5e9ef0" stroke-width="1" fill="none"/></svg>
<svg class="a" style="left:1035px;top:846.6px" width="31" height="31" viewBox="0 0 31 31"><defs><linearGradient id="tg" x1="0" y1="0" x2="1" y2="0"><stop offset="0" stop-color="#8a8a8a"/><stop offset="0.35" stop-color="#e4e4e4"/><stop offset="0.55" stop-color="#9a9a9a"/><stop offset="0.75" stop-color="#d4d4d4"/><stop offset="1" stop-color="#7c7c7c"/></linearGradient></defs><rect x="13.2" y="4.9" width="3.6" height="2.6" rx="1.3" fill="#c4c4c4"/><path d="M7.7 10.6H21.8L20.2 22.6Q14.8 25.8 9.3 22.6Z" fill="url(#tg)"/><path d="M7.7 11.2H21.8" stroke="#9cc" stroke-width="0.6"/><ellipse cx="14.7" cy="8.7" rx="7.9" ry="2.3" fill="#f00808"/></svg>
<svg class="a" style="left:1074px;top:846px" width="31" height="31" viewBox="0 0 31 31"><g fill="#0a78f0" transform="translate(0.2,0.4)"><rect x="8" y="6" width="13.6" height="2.2"/><path d="M14.8 8.2L20.9 14.6H17.7V24.3H12.2V14.6H8.4Z"/></g></svg>
<svg class="a" style="left:1113px;top:846px" width="31" height="31" viewBox="0 0 31 31"><path d="M14.7 5.6L21.1 13H17.6V23.4H12V13H8.2Z" fill="#0a78f0" transform="translate(0.4,0.4)"/></svg>
<svg class="a" style="left:1152px;top:846px" width="31" height="31" viewBox="0 0 31 31"><path d="M11.9 5.6H17.4V15.9H21.2L14.6 23.4L8 15.9H11.9Z" fill="#0a78f0" transform="translate(0.4,0.4)"/></svg>
<svg class="a" style="left:1191px;top:846px" width="31" height="31" viewBox="0 0 31 31"><g transform="translate(0.4,0.4)"><path d="M11.9 5.9H17.2V15.9H21.1L14.5 22.8L8 15.9H11.9Z" fill="#0a78f0"/><rect x="7.6" y="22.6" width="13.8" height="1.9" fill="#3274b8"/></g></svg>

<div class="a" style="left:2327.3px;top:891.2px;width:2.6px;height:2.6px;border-radius:1.3px;background:#5a5a5a"></div>
<div class="a" style="left:2332.8px;top:891.2px;width:2.6px;height:2.6px;border-radius:1.3px;background:#5a5a5a"></div>
<div class="a" style="left:2338.3px;top:891.2px;width:2.6px;height:2.6px;border-radius:1.3px;background:#5a5a5a"></div>
<div class="a" style="left:914px;top:905px;width:1600px;height:32px;background:#d8dfe1;border-bottom:1px solid #b9c8cc"></div>
<div class="vl" style="left:914px;top:936px;height:400px"></div>
<div class="t" style="left:2273.7px;top:911px;font-size:15.5px;line-height:20px;height:20px;letter-spacing:0.260px">hout (Naaldhout)</div>
<div class="a" style="left:920px;top:942px;width:641px;height:289px;border:1px solid #fff"></div>
<div class="a" style="left:927px;top:949px;width:622px;height:28px;background:#d8dfe1;border-left:1px solid #b9c8cc;border-top:1px solid #b9c8cc;border-right:1px solid #b9c8cc"></div>
<div class="t" style="left:931.5px;top:954.8px;letter-spacing:-0.481px">Algemene eigenschappen</div>
<div class="a" style="left:1592px;top:942px;width:641px;height:227px;border:1px solid #fff"></div>
<div class="a" style="left:1599px;top:949px;width:622px;height:28px;background:#d8dfe1;border-left:1px solid #b9c8cc;border-top:1px solid #b9c8cc;border-right:1px solid #b9c8cc"></div>
<div class="t" style="left:1603.5px;top:954.8px;letter-spacing:-0.506px">Fysische eigenschappen</div>
<div class="t" style="left:926.5px;top:986.5px;letter-spacing:-0.407px">Aanduiding</div>
<div class="inp" style="left:1271px;top:980px;width:273px"></div>
<div class="t" style="left:1273px;top:983.2px;letter-spacing:0.621px">hout</div>
<div class="t" style="left:926.5px;top:1017.5px;letter-spacing:-0.185px">Omschrijving</div>
<div class="inp" style="left:1271px;top:1011px;width:273px"></div>
<div class="t" style="left:1273px;top:1014.2px;letter-spacing:-0.351px">Naaldhout</div>
<div class="t" style="left:926.5px;top:1048.5px;letter-spacing:-0.236px">Type materiaal</div>
<div class="inp" style="left:1271px;top:1042px;width:273px"></div>
<div class="t" style="left:1273px;top:1045.2px;letter-spacing:-0.771px">Materiaallaag</div>
<svg class="a" style="left:1528px;top:1052px" width="9" height="5" viewBox="0 0 9 5"><path d="M0.3 0H8.7L4.5 4.6Z" fill="#7a7a7a"/></svg>
<div class="t" style="left:926.5px;top:1079.5px;letter-spacing:-0.190px">Standaard dikte</div>
<div class="t" style="left:1198.8999999999999px;top:1079.5px;letter-spacing:0.338px">(defd) [m]</div>
<div class="inp" style="left:1271px;top:1073px;width:273px"></div>
<div class="t" style="left:1273px;top:1076.2px;letter-spacing:0.115px">0,000000</div>
<div class="d3" style="left:1526px;top:1083px"></div>
<div class="t" style="left:926.5px;top:1110.5px;letter-spacing:-0.459px">Kleur materiaal</div>
<div class="inp" style="left:1271px;top:1104px;width:273px"></div>
<div class="a" style="left:1273px;top:1106px;width:36px;height:19px;background:#833c3c;border:1px solid #8d8d8d"></div>
<div class="t" style="left:1311.7px;top:1107.8px;word-spacing:3px;letter-spacing:0.498px">(128; 64; 64)</div>
<div class="d3" style="left:1526px;top:1114px"></div>
<svg class="a" style="left:1507px;top:1114px" width="9" height="5" viewBox="0 0 9 5"><path d="M0.3 0H8.7L4.5 4.6Z" fill="#7a7a7a"/></svg>
<div class="t" style="left:926.5px;top:1141.5px;letter-spacing:-0.362px">Leverancier</div>
<div class="inp" style="left:1271px;top:1135px;width:273px"></div>
<div class="t" style="left:926.5px;top:1172.5px;letter-spacing:-0.319px">Fabrikant</div>
<div class="inp" style="left:1271px;top:1166px;width:273px"></div>
<div class="t" style="left:1273px;top:1169.2px;letter-spacing:-0.665px">isso6</div>
<div class="t" style="left:926.5px;top:1203.5px;letter-spacing:-0.144px">Bron</div>
<div class="inp" style="left:1271px;top:1197px;width:273px"></div>
<div class="t" style="left:1598.5px;top:986.5px;letter-spacing:-0.262px">Soortelijke massa (rho)</div>
<div class="t" style="left:1850.0px;top:986.5px;letter-spacing:0.571px">(rho) [kg/m³]</div>
<div class="inp" style="left:1943px;top:980px;width:273px"></div>
<div class="t" style="left:1945px;top:983.2px;letter-spacing:0.079px">550,000</div>
<div class="d3" style="left:2198px;top:990px"></div>
<div class="t" style="left:1598.5px;top:1017.5px;letter-spacing:-0.142px">Soortelijke warmte (c)</div>
<div class="t" style="left:1854.8999999999999px;top:1017.5px;letter-spacing:0.167px">(c) [J/(kg.K)]</div>
<div class="inp" style="left:1943px;top:1011px;width:273px"></div>
<div class="t" style="left:1945px;top:1014.2px;letter-spacing:0.054px">1880</div>
<div class="d3" style="left:2198px;top:1021px"></div>
<div class="t" style="left:1598.5px;top:1048.5px;letter-spacing:-0.261px">Warmtegeleidingscoëfficiënt (λ)</div>
<div class="t" style="left:1813.1px;top:1048.5px;letter-spacing:0.066px">(lambda) [W/(m.K)]</div>
<div class="inp" style="left:1943px;top:1042px;width:73px;background:#ebeff0"></div>
<div class="inp" style="left:2020px;top:1042px;width:196px"></div>
<div class="t" style="left:1945px;top:1045.2px;letter-spacing:0.160px">0,120</div>
<div class="t" style="left:2022px;top:1045.2px;letter-spacing:0.130px">.12</div>
<div class="d3" style="left:2198px;top:1052px"></div>
<div class="t" style="left:1598.5px;top:1079.5px;letter-spacing:-0.497px">Emissiefactor</div>
<div class="t" style="left:1883.8999999999999px;top:1079.5px;letter-spacing:0.216px">(eps) [-]</div>
<div class="inp" style="left:1943px;top:1073px;width:273px"></div>
<div class="t" style="left:1945px;top:1076.2px;letter-spacing:0.160px">0,900</div>
<div class="d3" style="left:2198px;top:1083px"></div>
<div class="t" style="left:1598.5px;top:1110.5px;letter-spacing:-0.222px">Dampdiffusieweerstandsfactor (mu)</div>
<div class="t" style="left:1885.1px;top:1110.5px;letter-spacing:0.512px">(mu) [-]</div>
<div class="inp" style="left:1943px;top:1104px;width:273px"></div>
<div class="t" style="left:1945px;top:1107.2px;letter-spacing:0.135px">0,00</div>
<div class="d3" style="left:2198px;top:1114px"></div>
<div class="t" style="left:1598.5px;top:1141.5px;letter-spacing:-0.334px">Diffusie-equivalente luchtlaagdikte</div>
<div class="t" style="left:1884.3px;top:1141.5px;letter-spacing:0.300px">(sd) [m]</div>
<div class="inp" style="left:1943px;top:1135px;width:273px"></div>
<div class="t" style="left:1945px;top:1138.2px;letter-spacing:0.160px">0,000</div>
<div class="d3" style="left:2198px;top:1145px"></div>
<div class="a" style="left:1571.6px;top:1105px;width:20px;height:20px;border-radius:10px;background:#ff5500"></div>
<div class="a" style="left:1573.5px;top:1140.8px;width:20px;height:20px;border-radius:10px;background:#ff5500"></div>
</body></html>
